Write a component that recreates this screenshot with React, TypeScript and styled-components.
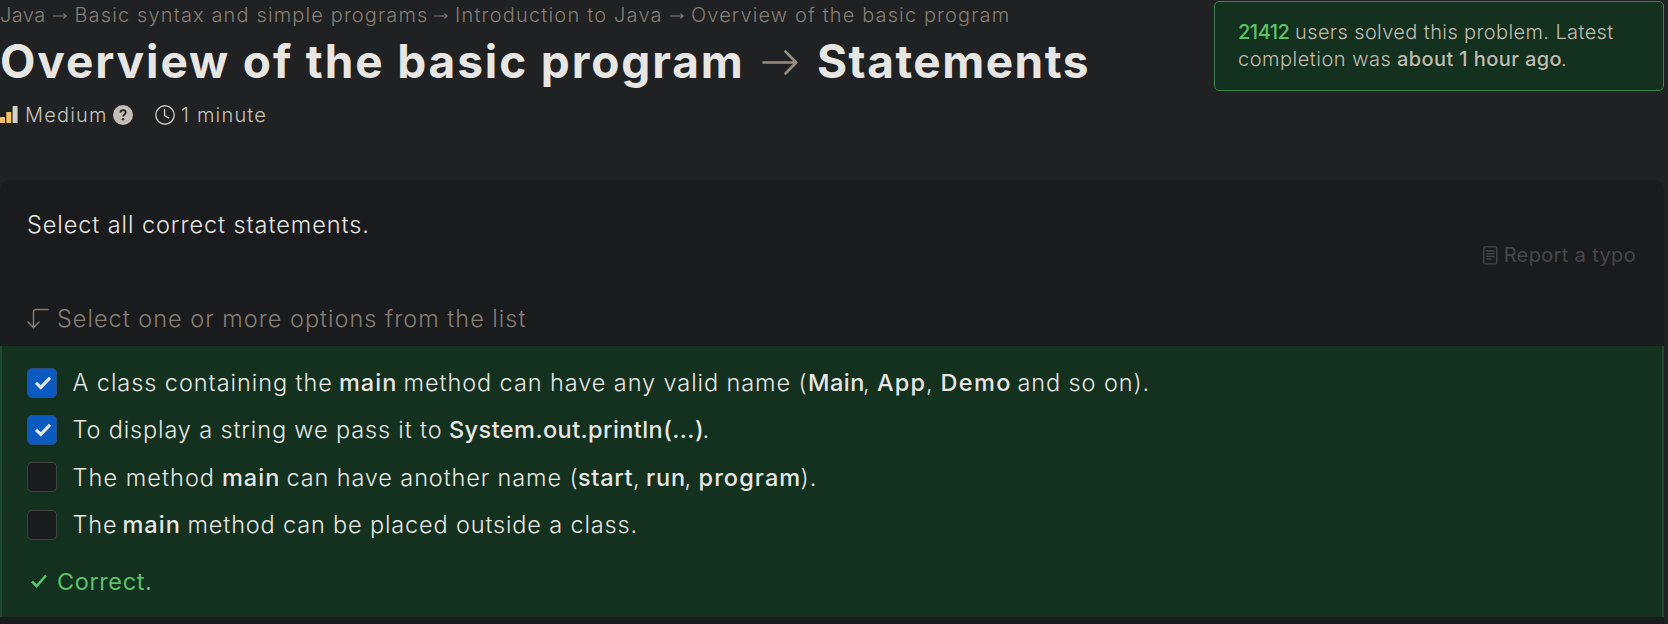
import React from 'react';
import styled, { createGlobalStyle } from 'styled-components';

const GlobalStyle = createGlobalStyle`
  * { box-sizing: border-box; }
  body {
    margin: 0;
    background: #1f2122;
    font-family: Inter, "Liberation Sans", sans-serif;
    font-weight: 330;
    color: #e8e6e3;
  }
`;

const Page = styled.div`
  width: 1664px;
  height: 624px;
  overflow: hidden;
  display: flex;
  flex-direction: column;
`;

const Header = styled.header`
  height: 180px;
  flex: none;
  display: flex;
  justify-content: space-between;
  align-items: flex-start;
`;

const Run = styled.span<{ $w?: number; $ls: number; $weight?: number }>`
  display: inline-block;
  white-space: pre;
  width: ${p => (p.$w ? `${p.$w}px` : 'auto')};
  letter-spacing: ${p => p.$ls}px;
  font-weight: ${p => p.$weight ?? 'inherit'};
`;

const Breadcrumbs = styled.nav`
  display: flex;
  align-items: center;
  height: 29px;
  font-size: 20px;
  color: #857e74;
`;

const Title = styled.h1`
  display: flex;
  align-items: center;
  height: 65px;
  margin: 0;
  font-size: 46px;
  line-height: 65px;
  font-weight: 700;
`;

const Meta = styled.div`
  display: flex;
  align-items: center;
  height: 42px;
  font-size: 20px;
  color: #c8c3bc;
`;

const Icon = styled.svg<{ $l?: number; $r?: number }>`
  flex: none;
  display: block;
  margin-left: ${p => p.$l ?? 0}px;
  margin-right: ${p => p.$r ?? 0}px;
`;

const Solved = styled.aside`
  width: 450px;
  height: 90px;
  margin-top: 1px;
  padding: 17px 22px 0 23px;
  border: 1px solid #35854a;
  border-radius: 5px;
  background: #14311f;
  font-size: 20px;
  line-height: 27.3px;
  color: #c0bbb0;
`;

const Count = styled(Run)`
  color: #5bc269;
`;

const Card = styled.main`
  flex: 1;
  display: flex;
  flex-direction: column;
  background: #1a1b1d;
  border-radius: 10px 10px 0 0;
`;

const Question = styled.p`
  margin: 29px 0 0 27px;
  font-size: 23.5px;
  line-height: 32px;
`;

const Report = styled.div`
  display: flex;
  align-items: center;
  align-self: flex-end;
  height: 28px;
  margin-right: 28px;
  font-size: 20px;
  font-weight: 400;
  color: #464748;
`;

const Hint = styled.div`
  display: flex;
  align-items: center;
  height: 55px;
  margin: 22px 0 0 27px;
  font-size: 23.5px;
  color: #857e74;
`;

const Answers = styled.section`
  height: 271px;
  padding: 13px 0 0 25px;
  background: #14311f;
  border: solid #1d4a2f;
  border-width: 0 2px;
`;

const Option = styled.label`
  display: flex;
  align-items: center;
  height: 47.3px;
  font-size: 23.5px;
`;

const Box = styled.span<{ $on: boolean }>`
  display: flex;
  align-items: center;
  justify-content: center;
  width: 30px;
  height: 30px;
  margin-right: 15.5px;
  border: 1px solid ${p => (p.$on ? '#2d4f86' : '#3d4543')};
  border-radius: 5px;
  background: ${p => (p.$on ? '#0b5ac2' : '#1a1b1d')};
`;

const Result = styled.div`
  display: flex;
  align-items: center;
  height: 30px;
  margin-top: 18px;
  font-size: 23.5px;
  font-weight: 400;
  color: #5bc269;
`;

const SmallArrow = () => (
  <Icon $l={8} $r={7.5} width="14" height="12" viewBox="0 0 14 12" fill="none" stroke="currentColor" strokeWidth="1.2">
    <path d="M0 7H13M10.4 4.6L13.2 7L10.4 9.4" />
  </Icon>
);

const Check = () => (
  <Icon $l={1} width="16" height="14" viewBox="0 0 16 14" fill="none" stroke="currentColor">
    <path d="M1 6.8L5.8 11.4L15 1.8" strokeWidth="3.2" />
  </Icon>
);

type Seg = [text: string, width: number, spacing: number, bold?: boolean];

const options: { on: boolean; segs: Seg[] }[] = [
  {
    on: true,
    segs: [
      ['A class containing the', 266.5, 0.94],
      ['main', 64.5, 1, true],
      ['method can have any valid name (', 404.5, 0.92],
      ['Main', 55, 0.5, true],
      [',', 14, 0],
      ['App', 49, 1.2, true],
      [',', 14.5, 0],
      ['Demo', 77, 1.4, true],
      ['and so on).', 140, 0.9],
    ],
  },
  {
    on: true,
    segs: [
      ['To display a string we pass it to', 376.5, 0.86],
      ['System.out.println(...)', 253.5, 0.43, true],
      ['.', 10, 0],
    ],
  },
  {
    on: false,
    segs: [
      ['The method', 149.5, 1.05],
      ['main', 64.5, 1, true],
      ['can have another name (', 291.5, 0.88],
      ['start', 55, 0.7, true],
      [',', 13, 0],
      ['run', 38.5, 0.9, true],
      [',', 14, 0],
      ['program', 102, 1.1, true],
      [').', 20, 1],
    ],
  },
  {
    on: false,
    segs: [
      ['The', 50, 0.9],
      ['main', 65, 1, true],
      ['method can be placed outside a class.', 460, 0.84],
    ],
  },
];

export default function App() {
  return (
    <>
      <GlobalStyle />
      <Page>
        <Header>
          <div>
            <Breadcrumbs>
              <Run $w={45} $ls={0.4}>Java</Run>
              <SmallArrow />
              <Run $w={351} $ls={1.13}>Basic syntax and simple programs</Run>
              <SmallArrow />
              <Run $w={206.5} $ls={1.2}>Introduction to Java</Run>
              <SmallArrow />
              <Run $ls={1.12}>Overview of the basic program</Run>
            </Breadcrumbs>
            <Title>
              <Run $w={761.5} $ls={1.88}>Overview of the basic program</Run>
              <Icon $r={19.5} width="36" height="26" viewBox="0 0 36 26" fill="none" stroke="#958d82" strokeWidth="2.6" strokeLinecap="round" strokeLinejoin="round">
                <path d="M1.5 13.5H34M23.5 2.5L34.3 13.5L23.5 24.5" />
              </Icon>
              <Run $ls={1.5}>Statements</Run>
            </Title>
            <Meta>
              <Icon $r={7} width="18" height="18" viewBox="0 0 18 18">
                <rect x="0" y="11" width="5" height="6" rx="0.6" fill="#f5c261" />
                <rect x="6.3" y="6" width="5" height="11" rx="0.6" fill="#f5c261" />
                <rect x="12.6" y="0" width="5" height="17" rx="0.6" fill="#d3cfc9" />
              </Icon>
              <Run $w={88} $ls={1.2}>Medium</Run>
              <Icon $r={22} width="20" height="20" viewBox="0 0 20 20">
                <circle cx="10" cy="10" r="10" fill="#c4beb6" />
                <path d="M7.3 7.6C7.5 5.9 8.6 5.2 10 5.2C11.6 5.2 12.7 6.1 12.7 7.5C12.7 9.3 10.2 9.5 10.2 11.6" fill="none" stroke="#1f2122" strokeWidth="1.8" />
                <circle cx="10.1" cy="14.2" r="1.2" fill="#1f2122" />
              </Icon>
              <Icon $r={6} width="20" height="20" viewBox="0 0 20 20" fill="none" stroke="#c8c3bc" strokeWidth="1.4">
                <circle cx="10" cy="10" r="9.2" />
                <path d="M9.6 4V10.6L14 13.2" />
              </Icon>
              <Run $ls={1.2}>1 minute</Run>
            </Meta>
          </div>
          <Solved>
            <div>
              <Count $w={57} $ls={-0.5} $weight={550}>21412</Count>
              <Run $ls={0.39}>users solved this problem. Latest</Run>
            </div>
            <div>
              <Run $w={159} $ls={0.5}>completion was</Run>
              <Run $w={164} $ls={0.4} $weight={500}>about 1 hour ago</Run>
              <Run $ls={0}>.</Run>
            </div>
          </Solved>
        </Header>
        <Card>
          <Question>
            <Run $ls={0.92}>Select all correct statements.</Run>
          </Question>
          <Report>
            <Icon $r={6} width="15" height="19" viewBox="0 0 15 19" fill="none" stroke="currentColor" strokeWidth="1.3">
              <rect x="0.8" y="0.8" width="13" height="17" rx="1.6" />
              <path d="M3.5 5H11.5M3.5 7.7H11.5M3.5 10.3H11.5M3.5 13H8" />
            </Icon>
            <Run $ls={0.35}>Report a typo</Run>
          </Report>
          <Hint>
            <Icon $r={8} width="22" height="21" viewBox="0 0 22 21" fill="none" stroke="currentColor" strokeWidth="1.5" strokeLinecap="round">
              <path d="M21 1.5H9Q6.5 1.5 6.5 4V19.5M1 14L6.5 19.7L12 14" />
            </Icon>
            <Run $ls={1}>Select one or more options from the list</Run>
          </Hint>
          <Answers>
            {options.map((o, i) => (
              <Option key={i}>
                <Box $on={o.on}>{o.on && <Check />}</Box>
                {o.segs.map(([text, w, ls, bold], j) => (
                  <Run key={j} $w={w} $ls={ls} $weight={bold ? 500 : undefined}>{text}</Run>
                ))}
              </Option>
            ))}
            <Result>
              <Icon $l={4} $r={10} width="16" height="14" viewBox="0 0 16 14" fill="none" stroke="currentColor" strokeWidth="2.6">
                <path d="M1 7.5L5.6 12L15 1.5" />
              </Icon>
              <Run $ls={0.6}>Correct.</Run>
            </Result>
          </Answers>
        </Card>
      </Page>
    </>
  );
}
